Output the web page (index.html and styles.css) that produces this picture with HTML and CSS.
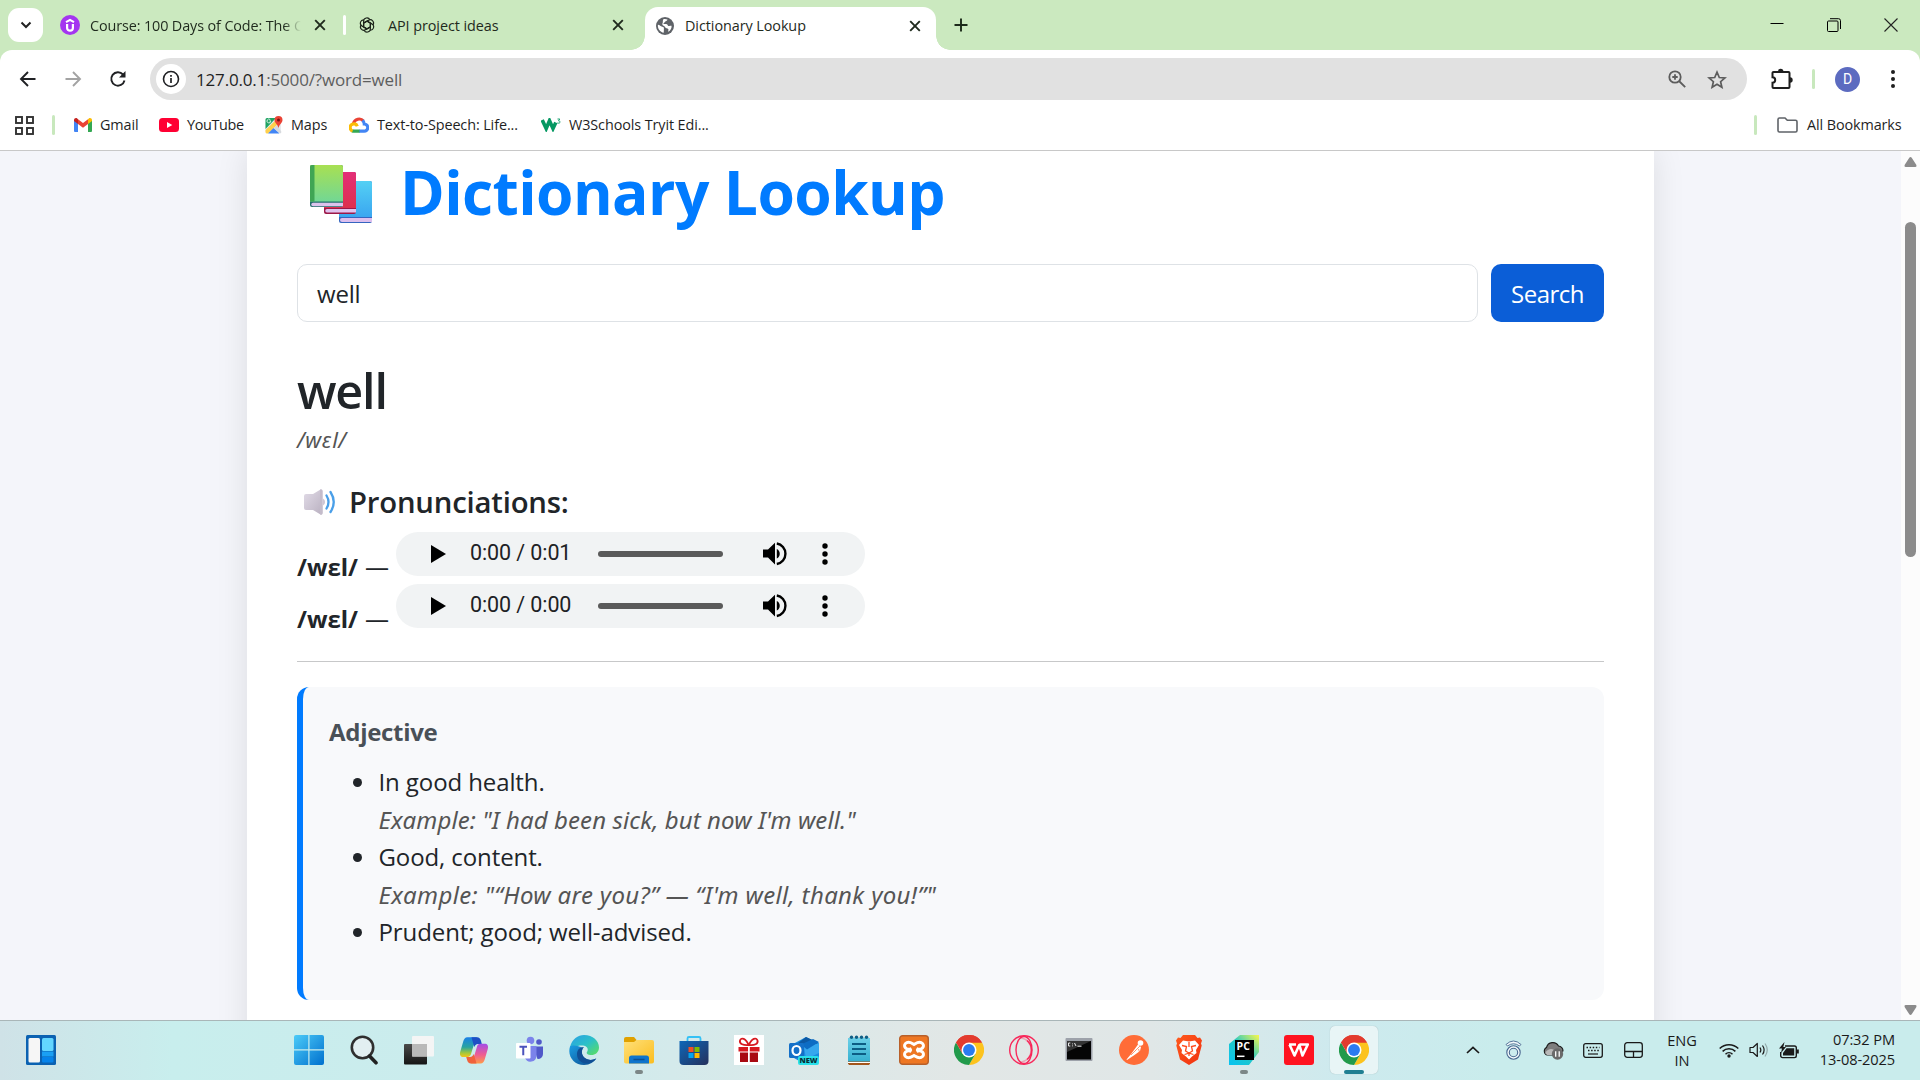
FILE: index.html
```html
<!DOCTYPE html>
<html lang="en">
<head>
<meta charset="utf-8">
<title>Dictionary Lookup</title>
<link rel="stylesheet" href="styles.css">
</head>
<body>
<svg class="defs" width="0" height="0" aria-hidden="true">
  <defs>
    <linearGradient id="gWin" x1="0" y1="0" x2="1" y2="1"><stop offset="0" stop-color="#4ccbf8"/><stop offset="1" stop-color="#0070ce"/></linearGradient>
    <linearGradient id="gBook1" x1="0" y1="0" x2="0" y2="1"><stop offset="0" stop-color="#a8e052"/><stop offset="1" stop-color="#72d794"/></linearGradient>
    <linearGradient id="gBook2" x1="0" y1="0" x2="0" y2="1"><stop offset="0" stop-color="#e32f78"/><stop offset="1" stop-color="#dd304d"/></linearGradient>
    <linearGradient id="gBook3" x1="0" y1="0" x2="0" y2="1"><stop offset="0" stop-color="#54d0f4"/><stop offset="1" stop-color="#3aa6f0"/></linearGradient>
    <linearGradient id="gSpk" x1="0" y1="0" x2="1" y2="1"><stop offset="0" stop-color="#e2dce8"/><stop offset="1" stop-color="#b9b0c0"/></linearGradient>
    <linearGradient id="gEdge" x1="0" y1="0" x2="1" y2="1"><stop offset="0" stop-color="#2a9fe6"/><stop offset=".5" stop-color="#2cc0c8"/><stop offset="1" stop-color="#5fe05a"/></linearGradient>
    <linearGradient id="gEdge2" x1="0" y1="0" x2="1" y2="1"><stop offset="0" stop-color="#1b9de2"/><stop offset="1" stop-color="#0c4a8e"/></linearGradient>
    <linearGradient id="gFold" x1="0" y1="0" x2="1" y2="1"><stop offset="0" stop-color="#ffe07a"/><stop offset="1" stop-color="#fbbd1e"/></linearGradient>
    <linearGradient id="gStore" x1="0" y1="0" x2="1" y2="1"><stop offset="0" stop-color="#0d67b8"/><stop offset="1" stop-color="#25305c"/></linearGradient>
    <linearGradient id="gCopL" x1="0" y1="0" x2="0" y2="1"><stop offset="0" stop-color="#1a7fe8"/><stop offset=".5" stop-color="#28a4a0"/><stop offset=".8" stop-color="#a5c83a"/><stop offset="1" stop-color="#f5c518"/></linearGradient>
    <linearGradient id="gCopR" x1="0" y1="0" x2="0" y2="1"><stop offset="0" stop-color="#a34be8"/><stop offset=".55" stop-color="#ee5d92"/><stop offset="1" stop-color="#ff9b48"/></linearGradient>
    <linearGradient id="gPy" x1="0" y1="1" x2="1" y2="0"><stop offset="0" stop-color="#07c3f2"/><stop offset=".5" stop-color="#21c7c8"/><stop offset="1" stop-color="#fcf84a"/></linearGradient>
    <linearGradient id="gBrave" x1="0" y1="0" x2="1" y2="1"><stop offset="0" stop-color="#ff5a1c"/><stop offset="1" stop-color="#f03010"/></linearGradient>
    <linearGradient id="gNote" x1="0" y1="0" x2="0" y2="1"><stop offset="0" stop-color="#6cd0e8"/><stop offset="1" stop-color="#36b0d0"/></linearGradient>
    <linearGradient id="gDark" x1="0" y1="0" x2="0" y2="1"><stop offset="0" stop-color="#4a4a4a"/><stop offset="1" stop-color="#151515"/></linearGradient>
  </defs>
  <symbol id="chrome" viewBox="0 0 48 48">
    <path d="M24 24 3.2 12A24 24 0 0 1 44.8 12Z" fill="#e33b2e"/>
    <path d="M24 12H44.8A24 24 0 0 1 24 48L34.4 30Z" fill="#fcc31e"/>
    <path d="M3.2 12A24 24 0 0 0 24 48L34.4 30 13.6 30Z" fill="#219a4b"/>
    <path d="M24 12H44.8A24 24 0 0 0 3.2 12L13.6 30Z" fill="#e33b2e"/>
    <circle cx="24" cy="24" r="12" fill="#fff"/><circle cx="24" cy="24" r="9.5" fill="#2b7bf0"/>
  </symbol>
  <symbol id="close" viewBox="0 0 12 12"><path d="M1.2 1.2 10.8 10.8M10.8 1.2 1.2 10.8" stroke="#1f2a1d" stroke-width="1.9" fill="none"/></symbol>
</svg>

<header class="browser">
  <div class="tabstrip">
    <button class="tab-search"><svg width="12" height="8" viewBox="0 0 12 8"><path d="M1.5 1.5 6 6l4.500-4.500" fill="none" stroke="#222" stroke-width="2"/></svg></button>
    <div class="tab tab-first">
      <svg class="fav" width="20" height="20" viewBox="0 0 20 20"><circle cx="10" cy="10" r="10" fill="#a435f0"/><path d="M6 7.200 10 4.800l4 2.400" fill="none" stroke="#fff" stroke-width="2"/><path d="M7.100 9v4a2.900 2.600 0 0 0 5.800 0V9" fill="none" stroke="#fff" stroke-width="2.200"/></svg>
      <span class="tab-title fade">Course: 100 Days of Code: The C</span>
      <svg class="tab-close" width="12" height="12"><use href="#close"/></svg>
    </div>
    <div class="tab-sep"></div>
    <div class="tab tab-second">
      <svg class="fav" width="18" height="18" viewBox="0 0 18 18"><g fill="none" stroke="#1c241a" stroke-width="1.100"><path id="knot" d="M5.600 10.800V5.200a3.300 3.300 0 0 1 6.300-1.400M5.600 7 9 5.100l4.600 2.700"/><use href="#knot" transform="rotate(60 9 9)"/><use href="#knot" transform="rotate(120 9 9)"/><use href="#knot" transform="rotate(180 9 9)"/><use href="#knot" transform="rotate(240 9 9)"/><use href="#knot" transform="rotate(300 9 9)"/></g></svg>
      <span class="tab-title">API project ideas</span>
      <svg class="tab-close" width="12" height="12"><use href="#close"/></svg>
    </div>
    <div class="tab tab-active">
      <svg class="fav" width="18" height="18" viewBox="0 0 18 18"><circle cx="9" cy="9" r="9" fill="#5f6368"/><path d="M1.900 7.800c2 .1 2.700 1.700 4.300 1.900 1.800.1 1.800 1.300 1.700 2.500.1 1.200-.2 2.400-.2 3.600-3.500-.5-6.300-4-5.800-8zM7.300 2.200c1.500-.4 3-.2 4.200.4-.2 1.300-1.300 1.600-2.300 1.900-.4 1.300-1.900 1.200-1.700 2.400 1.600.4 3.600-.5 4.200 1.300.5 1.200 1.900.7 3.900.6.2 2.600-1.200 4.900-3.300 6-.6-.8.700-1.900-.1-2.800-.7-1-2.500-.5-3-1.800-.4-1.400-2-1.100-2.700-2.200-.6-1.600.6-2 .3-3.300-.1-1 .2-1.700.5-2.500z" fill="#fff"/></svg>
      <span class="tab-title">Dictionary Lookup</span>
      <svg class="tab-close" width="12" height="12"><use href="#close"/></svg>
    </div>
    <svg class="new-tab" width="14" height="14" viewBox="0 0 14 14"><path d="M7 .5v13M.5 7h13" stroke="#1c2a1a" stroke-width="1.900"/></svg>
    <div class="window-controls">
      <svg width="14" height="14" viewBox="0 0 14 14"><path d="M.5 5.500h13" stroke="#000" stroke-width="1"/></svg>
      <svg width="14" height="14" viewBox="0 0 14 14"><rect x=".5" y="3" width="10.500" height="10.500" rx="1" fill="none" stroke="#000"/><path d="M3 .7h8.500a2 2 0 0 1 2 2V11" fill="none" stroke="#000"/></svg>
      <svg width="14" height="14" viewBox="0 0 14 14"><path d="M.5.5l13 13M13.500.5l-13 13" stroke="#222" stroke-width="1.100"/></svg>
    </div>
  </div>

  <div class="toolbar">
    <div class="nav-btn"><svg width="18" height="18" viewBox="0 0 18 18"><path d="M16.500 9H2.500M9 2 2 9l7 7" fill="none" stroke="#202124" stroke-width="1.900"/></svg></div>
    <div class="nav-btn"><svg width="18" height="18" viewBox="0 0 18 18"><path d="M1.500 9h14M9 2l7 7-7 7" fill="none" stroke="#a3a3a3" stroke-width="1.900"/></svg></div>
    <div class="nav-btn"><svg width="18" height="18" viewBox="0 0 18 18"><path d="M15.500 10.500A6.700 6.700 0 1 1 14 4.500l1.500 1.700" fill="none" stroke="#202124" stroke-width="1.900"/><path d="M16.500 1v6.500H10z" fill="#202124"/></svg></div>
    <div class="omnibox">
      <div class="site-info"><svg width="18" height="18" viewBox="0 0 18 18"><circle cx="9" cy="9" r="7.500" fill="none" stroke="#202124" stroke-width="1.600"/><path d="M9 8v5M9 5v1.700" stroke="#202124" stroke-width="1.700"/></svg></div>
      <span class="url"><span class="host">127.0.0.1</span>:5000/?word=well</span>
      <svg class="omni-icon" width="18" height="18" viewBox="0 0 18 18"><circle cx="7" cy="7" r="5.700" fill="none" stroke="#5c5c5c" stroke-width="1.800"/><path d="M11 11l6.200 6.200M7 4.300v5.400M4.300 7h5.400" stroke="#5c5c5c" stroke-width="1.800"/></svg>
      <svg class="omni-icon star" width="20" height="19" viewBox="0 0 20 19"><path d="M10 2.200l2.300 5.300 5.600.5-4.300 3.700 1.300 5.600L10 14.300l-4.900 3 1.300-5.600L2.100 8l5.600-.5z" fill="none" stroke="#5c5c5c" stroke-width="1.700"/></svg>
    </div>
    <svg class="puzzle" width="22" height="22" viewBox="0 0 22 22"><path d="M2.500 4h15a1 1 0 0 1 1 1v14a1 1 0 0 1-1 1h-15a1 1 0 0 1-1-1v-4.300a2.700 2.700 0 0 0 0-5.400V5a1 1 0 0 1 1-1z" fill="none" stroke="#1f1f1f" stroke-width="2"/><path d="M7 3.500a2.700 2.700 0 0 1 5.400 0zM19 9.300a2.700 2.700 0 0 1 0 5.400z" fill="#1f1f1f"/></svg>
    <div class="v-sep"></div>
    <div class="avatar">D</div>
    <svg class="kebab" width="6" height="20" viewBox="0 0 6 20"><g fill="#1f1f1f"><circle cx="3" cy="3" r="2"/><circle cx="3" cy="10" r="2"/><circle cx="3" cy="17" r="2"/></g></svg>
  </div>

  <div class="bookmarks">
    <svg class="apps" width="19" height="19" viewBox="0 0 19 19"><g fill="none" stroke="#333" stroke-width="1.900"><rect x="1" y="1" width="6" height="6"/><rect x="12" y="1" width="6" height="6"/><rect x="1" y="12" width="6" height="6"/><rect x="12" y="12" width="6" height="6"/></g></svg>
    <div class="v-sep"></div>
    <div class="bm bm-gmail"><svg width="18" height="14" viewBox="0 0 18 14"><path d="M0 2v11a1 1 0 0 0 1 1h3V5z" fill="#4285f4"/><path d="M18 2v11a1 1 0 0 1-1 1h-3V5z" fill="#34a853"/><path d="M14 1.300V6l4-3V2c0-1.700-2-2.500-3.200-1.500z" fill="#fbbc04"/><path d="M4 6V1.300l5 3.800 5-3.800V6L9 9.800z" fill="#ea4335"/><path d="M0 2v1l4 3V1.300L3.200.500C2-.5 0 .3 0 2z" fill="#c5221f"/></svg><span>Gmail</span></div>
    <div class="bm bm-yt"><svg width="20" height="14" viewBox="0 0 20 14"><rect width="20" height="14" rx="3.500" fill="#ff0033"/><path d="M8 4l5.300 3L8 10z" fill="#fff"/></svg><span>YouTube</span></div>
    <div class="bm bm-maps"><svg width="18" height="18" viewBox="0 0 18 18"><path d="M2 2h14v15H2a1.500 1.500 0 0 1-1.500-1.500v-12A1.500 1.500 0 0 1 2 2z" fill="#e8eaed"/><path d="M2 2h9L.5 13V3.500A1.500 1.500 0 0 1 2 2z" fill="#1fa463"/><path d="M.500 14 12 3l3 3L3 17.500H2A1.500 1.500 0 0 1 .5 16z" fill="#ffd04b"/><path d="M3 17.500l5.500-5.500 6 5.500z" fill="#4285f4"/><path d="M8.500 12 12 9l4.500 7-1 1.500z" fill="#d7dade"/><path d="M13.500 0A4 4 0 0 0 9.500 4c0 3 3.200 4 4 8 .8-4 4-5 4-8a4 4 0 0 0-4-4z" fill="#ea4335"/><circle cx="13.500" cy="4" r="1.500" fill="#7b1510"/><path d="M6 5H4.500m1.300.2A1.900 1.900 0 1 1 5.300 3.700" fill="none" stroke="#fff" stroke-width=".8"/></svg><span>Maps</span></div>
    <div class="bm bm-cloud"><svg width="20" height="16" viewBox="0 0 20 16"><path d="M4.500 6.500A5.800 5.800 0 0 1 14.500 4" fill="none" stroke="#ea4335" stroke-width="3.200"/><path d="M13.500 3.500c1.500 1.300 1.800 2.700 1.800 3.500a3.600 3.600 0 0 1-.3 7.200h-5" fill="none" stroke="#4285f4" stroke-width="3.200"/><path d="M10.500 14.200H5.300a3.500 3.500 0 0 1-2.300-.8" fill="none" stroke="#34a853" stroke-width="3.200"/><path d="M3.600 14A3.700 3.700 0 1 1 8.300 9.200" fill="none" stroke="#fbbc05" stroke-width="3.200"/></svg><span>Text-to-Speech: Life...</span></div>
    <div class="bm bm-w3"><svg width="20" height="14" viewBox="0 0 20 14"><path d="M1.200 2l4 8.500 3.300-7.800 3.500 7.800 2.800-6" fill="none" stroke="#059862" stroke-width="3.600"/><path d="M16.500 1h2.300l-1.300 1.800c1 0 1.500.6 1.500 1.300S18.300 5.500 16.300 5" fill="none" stroke="#059862" stroke-width=".9"/></svg><span>W3Schools Tryit Edi...</span></div>
    <div class="v-sep right-sep"></div>
    <div class="bm bm-all"><svg width="21" height="16" viewBox="0 0 21 16"><path d="M1 13.500v-11A1.500 1.500 0 0 1 2.500 1H8l2.300 2.300h8.200A1.500 1.500 0 0 1 20 4.800v8.700a1.500 1.500 0 0 1-1.500 1.500h-16A1.500 1.500 0 0 1 1 13.500z" fill="none" stroke="#5f6368" stroke-width="1.600"/></svg><span>All Bookmarks</span></div>
  </div>
</header>

<div class="viewport">
  <div class="page">
    <main class="container">
      <h1 class="title">
        <svg width="62" height="58" viewBox="0 0 62 58"><rect x="29" y="16" width="33" height="42" rx="2" fill="#3565c0"/><path d="M31 16h29a2 2 0 0 1 2 2v34H29V18a2 2 0 0 1 2-2z" fill="url(#gBook3)"/><path d="M32 53h30v4H32a2 2 0 0 1 0-4z" fill="#dcbfee"/><rect x="14" y="7" width="32" height="42" rx="2" fill="#9c1848"/><path d="M16 7h28a2 2 0 0 1 2 2v34H14V9a2 2 0 0 1 2-2z" fill="url(#gBook2)"/><path d="M17 44h29v3.500H17a1.750 1.750 0 0 1 0-3.500z" fill="#e0c3ee"/><rect width="33" height="42" rx="2" fill="#256e6c"/><path d="M2 0h29a2 2 0 0 1 2 2v34.500H0V2a2 2 0 0 1 2-2z" fill="url(#gBook1)"/><path d="M2 0h2.500v36.500H0V2a2 2 0 0 1 2-2z" fill="#40a554"/><path d="M3 37.800h30v3.400H3a1.700 1.700 0 0 1 0-3.400z" fill="#dcc3ec"/></svg>
        <span>Dictionary Lookup</span>
      </h1>
      <form class="search">
        <div class="field">well</div>
        <button type="button" class="submit">Search</button>
      </form>
      <h2 class="word">well</h2>
      <p class="phonetic">/wɛl/</p>
      <h4 class="pron-title">
        <svg width="32" height="26" viewBox="0 0 32 26"><path d="M0 7a2 2 0 0 1 2-2h7L16.500.4Q18.500 0 18.500 2v22q0 2-2 1.600L9 21H2a2 2 0 0 1-2-2z" fill="url(#gSpk)"/><path d="M16 .6q2.500-.6 2.500 1.400v22q0 2-2.500 1.400z" fill="#c4bccb"/><path d="M19 9.500a4 4 0 0 1 0 7z" fill="#cdc5d4"/><path d="M22.500 6.500q4 6.500 0 13M26.500 3q6.500 10 0 20" fill="none" stroke="#4a9fe8" stroke-width="2.300" stroke-linecap="round"/></svg>
        <span>Pronunciations:</span>
      </h4>
      <div class="pron"><strong>/wɛl/</strong><span class="dash">—</span>
        <div class="player">
          <svg class="play" width="15" height="18" viewBox="0 0 15 18"><path d="M0 0l15 9L0 18z"/></svg>
          <span class="time">0:00 / 0:01</span>
          <div class="track"></div>
          <svg class="volume" width="24" height="24" viewBox="0 0 24 24"><path d="M0 7.500v8h5L12 22.500V.8L5 7.500zM13.800 7v9.500a5.300 5.300 0 0 0 0-9.500z"/><path d="M13.800 1.500a10.400 10.400 0 0 1 0 20.500" fill="none" stroke="#000" stroke-width="2.400"/></svg>
          <svg class="more" width="6" height="22" viewBox="0 0 6 22"><circle cx="3" cy="3" r="2.700"/><circle cx="3" cy="11" r="2.700"/><circle cx="3" cy="19" r="2.700"/></svg>
        </div>
      </div>
      <div class="pron"><strong>/wɛl/</strong><span class="dash">—</span>
        <div class="player">
          <svg class="play" width="15" height="18" viewBox="0 0 15 18"><path d="M0 0l15 9L0 18z"/></svg>
          <span class="time">0:00 / 0:00</span>
          <div class="track"></div>
          <svg class="volume" width="24" height="24" viewBox="0 0 24 24"><path d="M0 7.500v8h5L12 22.500V.8L5 7.500zM13.800 7v9.500a5.300 5.300 0 0 0 0-9.500z"/><path d="M13.800 1.500a10.400 10.400 0 0 1 0 20.500" fill="none" stroke="#000" stroke-width="2.400"/></svg>
          <svg class="more" width="6" height="22" viewBox="0 0 6 22"><circle cx="3" cy="3" r="2.700"/><circle cx="3" cy="11" r="2.700"/><circle cx="3" cy="19" r="2.700"/></svg>
        </div>
      </div>
      <hr class="rule">
      <section class="meaning">
        <h5 class="pos">Adjective</h5>
        <ul class="defs-list">
          <li>In good health.<em class="ex-one">Example: "I had been sick, but now I'm well."</em></li>
          <li>Good, content.<em class="ex-two">Example: "“How are you?” — “I'm well, thank you!”"</em></li>
          <li>Prudent; good; well-advised.</li>
        </ul>
      </section>
    </main>
  </div>
  <div class="scrollbar">
    <svg width="13" height="10" viewBox="0 0 13 10"><path d="M6.500 0q.7 0 1.200.8L12.400 8q.6 2-1 2H1.600Q0 10 .6 8L5.300.8Q5.800 0 6.500 0z" fill="#8b8b8b"/></svg>
    <div class="thumb"></div>
    <svg class="down" width="13" height="10" viewBox="0 0 13 10"><path d="M6.500 10q-.7 0-1.200-.8L.6 2Q0 0 1.600 0h9.800q1.600 0 1 2L7.700 9.200q-.5.800-1.200.8z" fill="#8b8b8b"/></svg>
  </div>
</div>

<footer class="taskbar">
  <div class="widgets"><svg width="30" height="30" viewBox="0 0 30 30"><rect width="30" height="30" rx="1.500" fill="#0b62b2"/><rect x="2.500" y="3" width="11.500" height="24.500" rx="1.500" fill="#f6f6f6"/><rect x="16" y="3" width="11.500" height="13" rx="1.500" fill="#63d6ff"/><rect x="16" y="16.500" width="11.500" height="5" fill="#1aa0f4"/><rect x="16" y="22" width="11.500" height="5.500" rx="1" fill="#0683ea"/></svg></div>
  <div class="apps-row">
    <div class="app"><svg viewBox="0 0 30 30"><path d="M2 0h12.300v14.300H0V2a2 2 0 0 1 2-2zM15.500 0H28a2 2 0 0 1 2 2v12.300H15.500zM0 15.500h14.300V30H2a2 2 0 0 1-2-2zM15.500 15.500H30V28a2 2 0 0 1-2 2H15.500z" fill="url(#gWin)"/></svg></div>
    <div class="app"><svg viewBox="0 0 30 30"><circle cx="13.500" cy="12.500" r="10.700" fill="#e2eff1" stroke="#2f2f2f" stroke-width="2.600"/><path d="M20.500 21l6.500 6.800" stroke="#222" stroke-width="3.600" stroke-linecap="round"/></svg></div>
    <div class="app"><svg viewBox="0 0 30 30"><rect y="9" width="23" height="20.500" rx="1" fill="url(#gDark)"/><rect x="8" y="1" width="22" height="20.500" rx="1" fill="#f5f5f5" opacity=".95"/><path d="M8 9h15v12.500H8z" fill="#b9b9b9"/></svg></div>
    <div class="app"><svg viewBox="0 0 30 30"><path d="M19 2.200H8.500C6 2.200 5 4 4.300 6.200L1.300 16.500C.3 20 1.500 22 4.500 22h4c2 0 3-1.200 3.600-3.200L16 6c.7-2.500 1.500-3.800 3-3.800z" fill="url(#gCopL)"/><path d="M12.500 2.200H18c2.300 0 3.300 1.400 3.900 3.400L22.800 9H19c-2 0-3.200 1.500-3.800 3z" fill="#1d4fc4"/><path d="M11 28.500h10.500c2.500 0 3.500-1.800 4.200-4l3-10.300c1-3.500-.2-5.500-3.200-5.500h-4c-2 0-3 1.200-3.600 3.200L14 24.700c-.7 2.500-1.500 3.800-3 3.800z" fill="url(#gCopR)"/><path d="M17.500 28.500H12c-2.300 0-3.300-1.400-3.900-3.400L7.200 22H11c2 0 3.200-1.500 3.800-3z" fill="#f0623c"/></svg></div>
    <div class="app"><svg viewBox="0 0 30 30"><circle cx="16.500" cy="5.500" r="3.800" fill="#7b83eb"/><circle cx="25" cy="7" r="2.800" fill="#5059c9"/><path d="M19 11.500h10V19a5 5 0 0 1-5.500 5z" fill="#5059c9"/><path d="M11 11h11.500v10a6 6 0 0 1-11.500 2z" fill="#7b83eb"/><rect x="2" y="8" width="14.500" height="15.500" rx=".8" fill="#fff"/><path d="M5.500 11.800h7.500M9.250 11.800v8.500" stroke="#4b53bc" stroke-width="2" fill="none"/></svg></div>
    <div class="app"><svg viewBox="0 0 30 30"><path d="M1 12C3 4 9 0 15 0c9 0 15 6 15 12.500 0 5-4 7.500-7.500 7.500-4 0-5.500-1.500-4.500-3 2-3 0-6-4-6.500C9 10 3 12 1 18z" fill="url(#gEdge)"/><path d="M1 11.500C-2 21 5 30 15 30c6 0 10-3 12.300-6.500-3 1.500-6 1.800-8.800.8C12 22 12 16 14 13.500 9 10 3.500 10 1 11.500z" fill="url(#gEdge2)"/><path d="M8 19c0-4 3-7.200 7-7-3 2.500-3.500 9 3 12.300 3.500 1.200 6.500.6 9.300-.8C22 31 8 30 8 19z" fill="#114f95"/></svg></div>
    <div class="app dot"><svg viewBox="0 0 30 30"><path d="M0 4a2 2 0 0 1 2-2h8l2.500 3v4H0z" fill="#e0a100"/><path d="M0 7h10l2.500-2H28a2 2 0 0 1 2 2v19.500a2 2 0 0 1-2 2H2a2 2 0 0 1-2-2z" fill="url(#gFold)"/><path d="M5 28.500V23a2.500 2.500 0 0 1 2.500-2.500h15A2.500 2.500 0 0 1 25 23v5.500z" fill="#0f75cc"/><path d="M9.500 24.500h11" stroke="#0b4f93" stroke-width="1.500"/></svg></div>
    <div class="app"><svg viewBox="0 0 30 30"><path d="M8.500 7V3.500a1.500 1.500 0 0 1 1.500-1.500h10a1.500 1.500 0 0 1 1.500 1.500V7" fill="none" stroke="#35c1f5" stroke-width="1.800"/><path d="M.5 6h29v20a4 4 0 0 1-4 4h-21a4 4 0 0 1-4-4z" fill="url(#gStore)"/><path d="M9.500 12h5v5h-5z" fill="#f25022"/><path d="M15.500 12h5v5h-5z" fill="#7fba00"/><path d="M9.500 18h5v5h-5z" fill="#00a4ef"/><path d="M15.500 18h5v5h-5z" fill="#ffb900"/></svg></div>
    <div class="app"><svg viewBox="0 0 30 30"><path d="M0 0h30v30H0z" fill="#fff"/><path d="M14.500 10C12 3 7 2 6 5.500s3.500 5 9 4.500c5.500.5 9.500-1 8.500-4.500S17.500 3 15 10z" fill="none" stroke="#d71920" stroke-width="1.800"/><path d="M4.500 12h9.500v4.500H4.500zM15.800 12h9.700v4.500h-9.700z" fill="#d71920"/><path d="M6 17.500h8V27H6zM15.800 17.500H24V27h-8.200z" fill="#a80a12"/></svg></div>
    <div class="app"><svg viewBox="0 0 30 30"><path d="M5 8.500 17 2l13 6.500v15L17 30 5 23z" fill="#1a8be0"/><path d="M9 8 17 2l13 6-13 6z" fill="#0c59a4"/><path d="M15 12l15-4v10l-13 6z" fill="#36a7ee"/><path d="M12 9.500 24 4l6 3-12 7.500z" fill="#0d6cc4"/><rect y="8" width="15" height="15" rx="1.500" fill="#1470c8"/><ellipse cx="7.500" cy="15.500" rx="4" ry="4.500" fill="none" stroke="#fff" stroke-width="2.200"/><rect x="9" y="21" width="21" height="9" rx="2" fill="#29e0ea"/><text class="new-label" x="19.600" y="28.200" text-anchor="middle">NEW</text></svg></div>
    <div class="app"><svg viewBox="0 0 30 30"><path d="M4 26h22v2.500L25 30H5l-1-1.500z" fill="#a4561c"/><path d="M4 27h22v1H4z" fill="#fff"/><path d="M4 3h22v23.500H4z" fill="url(#gNote)"/><g fill="#0f5e85"><circle cx="7.500" cy="2.300" r="1.700"/><circle cx="12.500" cy="2.300" r="1.700"/><circle cx="17.500" cy="2.300" r="1.700"/><circle cx="22.500" cy="2.300" r="1.700"/></g><path d="M8 9h14M8 14h14M8 19h14" stroke="#0c5d84" stroke-width="1.800"/></svg></div>
    <div class="app"><svg viewBox="0 0 30 30"><rect x=".7" y=".7" width="28.600" height="28.600" rx="3" fill="#ee7723" stroke="#b8602a" stroke-width="1.400"/><g fill="none" stroke="#fff" stroke-width="3"><path d="M12.500 13.500C8 16 3.500 11.500 6.500 8.500s6-.5 8.500 1c2.500-1.500 5.500-4 8.500-1s-1.500 7.500-6 5"/><path d="M12.500 16.500C8 14 3.500 18.500 6.500 21.500s6 .5 8.500-1c2.500 1.500 5.500 4 8.500 1s-1.500-7.500-6-5"/></g></svg></div>
    <div class="app"><svg><use href="#chrome"/></svg></div>
    <div class="app"><svg viewBox="0 0 30 30"><g fill="none" stroke="#f8275a" stroke-width="1.400"><circle cx="15" cy="15" r="14.300"/><ellipse cx="15" cy="15" rx="8" ry="13.500"/><path d="M11 2.500C19 4 22 9 22 15s-3 11-11 12.500" opacity=".35"/><path d="M18 5.500c6 5 6 14 0 19"/></g></svg></div>
    <div class="app"><svg viewBox="0 0 30 30"><rect x="1.500" y="3" width="27" height="23" rx="1" fill="#9da2aa"/><path d="M3 6h24v18.500H3z" fill="#050505"/><path d="M3 6h24L3 17z" fill="#333"/><path d="M6.300 8H4.500v3h1.800M8.500 8.500v.8M8.500 10.500v.8M10.500 8l1.500 3M13.500 11.200h4" stroke="#e8e8e8" stroke-width="1" fill="none"/></svg></div>
    <div class="app"><svg viewBox="0 0 30 30"><circle cx="15" cy="15" r="15" fill="#ff6c37"/><circle cx="21.500" cy="8" r="2.800" fill="#fff"/><path d="M19 9.500l3 2.500-1 4-5.500 4L8 25l-.5-.5 5-6z" fill="#fff"/><path d="M21 11l-9 9M19.500 14l1 3" stroke="#ff6c37" stroke-width=".7"/></svg></div>
    <div class="app"><svg viewBox="0 0 30 30"><path d="M9 0h12l2.500 3 2.500-.5 2 3-1 3 .7 2L24 24.500 15 30l-9-5.500L2.300 10.500l.7-2-1-3 2-3 2.500.5z" fill="url(#gBrave)"/><path d="M9 5.500l6 1 6-1L25 10l-3 5 .5 3-4.500 3.500L15 24.500l-3-3L7.500 18l.5-3-3-5z" fill="#fff"/><path d="M8 10.500l4.500 1-1 4.500 3.500 2 3.500-2-1-4.500 4.500-1M15 7v5M10.500 19.500l4.500-1.300 4.500 1.300M15 18v3" fill="none" stroke="#ff4a1c" stroke-width="1.300"/></svg></div>
    <div class="app dot"><svg viewBox="0 0 30 30"><path d="M11 0h19v17L20 30H0V9z" fill="url(#gPy)"/><rect x="6" y="5" width="19" height="20" fill="#000"/><text class="pc-label" x="7.600" y="14.800">PC</text><path d="M8 21.300h7.500" stroke="#fff" stroke-width="1.500"/></svg></div>
    <div class="app"><svg viewBox="0 0 30 30"><rect width="30" height="30" rx="3" fill="#ff1320"/><path d="M5 9.500h7M5.500 9.500l5 11 4.800-10.500 3.200 10.500L23.800 9.500H15.500" fill="none" stroke="#fff" stroke-width="2.600" stroke-linejoin="round"/></svg></div>
    <div class="app current"><svg><use href="#chrome"/></svg></div>
  </div>
  <div class="tray">
    <div class="tray-chevron"><svg width="14" height="8" viewBox="0 0 14 8"><path d="M1 7l6-5.700L13 7" fill="none" stroke="#1a1a1a" stroke-width="1.700"/></svg></div>
    <div class="tray-cell"><svg width="17" height="20" viewBox="0 0 17 20"><g fill="none" stroke="#4a6890"><circle cx="8.500" cy="12.500" r="6.700" fill="#f2f9fb" stroke-width="1.100"/><circle cx="8.500" cy="12.500" r="4.200" fill="#cdecee" stroke-width="1.100"/><path d="M1 4.500Q8.500-2.500 16 4.500L14.500 6Q8.500 1.500 2.500 6z" fill="#f2f9fb" stroke-width=".9"/></g></svg></div>
    <div class="tray-cell"><svg width="21" height="19" viewBox="0 0 21 19"><path d="M4.500 14A4 4 0 0 1 3.500 6.500 6.500 6.500 0 0 1 15.500 5 4.700 4.700 0 0 1 20 10l-8 4z" fill="#7d7d7d" stroke="#1c1c1c" stroke-width="1.100"/><path d="M2 12c3-5 8-5 10-2v4H4z" fill="#b9b9b9"/><circle cx="14.500" cy="13" r="5.700" fill="#6a6a6a"/><path d="M12.700 10.300v5.400M16.200 10.300v5.400" stroke="#fff" stroke-width="1.300"/></svg></div>
    <div class="tray-cell"><svg width="20" height="15" viewBox="0 0 20 15"><rect x=".7" y=".7" width="18.600" height="13.600" rx="2" fill="none" stroke="#1a1a1a" stroke-width="1.300"/><path d="M3.500 4.500h13M5 7.500h11" stroke="#1a1a1a" stroke-width="1.500" stroke-dasharray="1.500 1.600"/><path d="M5 11h10" stroke="#1a1a1a" stroke-width="1.200"/></svg></div>
    <div class="tray-cell"><svg width="19" height="16" viewBox="0 0 19 16"><rect x=".7" y=".7" width="17.600" height="14.600" rx="2.500" fill="none" stroke="#1a1a1a" stroke-width="1.300"/><path d="M1 9.500h17M9.500 9.500V15" stroke="#1a1a1a" stroke-width="1.300"/></svg></div>
    <div class="lang">ENG<br>IN</div>
    <div class="status">
      <svg width="20" height="15" viewBox="0 0 20 15"><g fill="none" stroke="#1a1a1a" stroke-width="1.500"><path d="M.7 5.500a13.200 13.200 0 0 1 18.600 0M3.600 8.400a9 9 0 0 1 12.800 0M6.500 11.200a5 5 0 0 1 7 0"/></g><circle cx="10" cy="13" r="1.700" fill="#1a1a1a"/></svg>
      <svg width="20" height="16" viewBox="0 0 20 16"><path d="M1 5.500h3L8.300 1.500v13L4 10.500H1z" fill="none" stroke="#1a1a1a" stroke-width="1.200" stroke-linejoin="round"/><path d="M11 5.500q1.700 2.500 0 5M13.500 3.500q3.200 4.500 0 9" fill="none" stroke="#1a1a1a" stroke-width="1.200"/><path d="M16 1.500q4.500 6.500 0 13" fill="none" stroke="#93aaab" stroke-width="1.200"/></svg>
      <svg width="20" height="17" viewBox="0 0 20 17"><path d="M6 4h9.500A1.800 1.800 0 0 1 17.300 5.800v8a1.800 1.800 0 0 1-1.800 1.800h-12a1.800 1.800 0 0 1-1.800-1.800V10" fill="none" stroke="#1a1a1a" stroke-width="1.400"/><path d="M7.500 6.200h7.700v7.300H4V11zM18 7.500h1.800v4H18zM5.500 0 0 6.500h3L2 11l5-6H4.300z" fill="#1a1a1a"/></svg>
    </div>
    <div class="clock">07:32 PM<br>13-08-2025</div>
  </div>
</footer>
</body>
</html>
```
FILE: styles.css
```css
* { box-sizing: border-box; }
body {
  margin: 0;
  width: 1920px;
  height: 1080px;
  overflow: hidden;
  display: flex;
  flex-direction: column;
  background: #fff;
  color: #212529;
  font-family: "Open Sans", "Noto Sans", sans-serif;
}
svg { display: block; flex: none; }
.defs { position: absolute; }
button { border: 0; font: inherit; padding: 0; }

/* Browser frame */
.browser {
  height: 151px; flex: none;
  border-bottom: 1px solid #c8c8c8;
  background: linear-gradient(#cbe9bf 0 64px, #fff 64px);
}
.tabstrip {
  height: 50px;
  display: flex;
  align-items: center;
  font-size: 14.4px;
  letter-spacing: -.07px;
  color: #1f2a1d;
}
.tab-search {
  width: 35px; height: 34px; margin-left: 8px;
  border-radius: 11px;
  background: #fff;
  display: flex; align-items: center; justify-content: center;
}
.tab { display: flex; align-items: center; height: 43px; white-space: nowrap; }
.tab-close { margin-left: auto; }
.tab-first { width: 300px; padding: 0 17px 0 17px; gap: 10px; }
.fade {
  width: 213px; margin-right: -4px; letter-spacing: -.12px;
  -webkit-mask-image: linear-gradient(90deg, #000 91%, transparent 99%);
  mask-image: linear-gradient(90deg, #000 91%, transparent 99%);
}
.tab-sep { width: 3px; height: 20px; background: #fff; border-radius: 2px; }
.tab-second { width: 299px; padding: 0 21px 0 12px; gap: 12px; }
.tab-active {
  position: relative;
  width: 291px; padding: 0 15px 0 11px; gap: 11px;
  align-self: flex-end;
  background: #fff;
  border-radius: 13px 13px 0 0;
}
.tab-active .fav, .tab-active .tab-title, .tab-active .tab-close { transform: translateY(-3px); }
.tab-active::before, .tab-active::after {
  content: ""; position: absolute; bottom: 0; width: 14px; height: 14px;
}
.tab-active::before { left: -14px; background: radial-gradient(circle at 0 0, transparent 13.5px, #fff 14px); }
.tab-active::after { right: -14px; background: radial-gradient(circle at 100% 0, transparent 13.5px, #fff 14px); }
.new-tab { margin-left: 18px; }
.window-controls { margin-left: auto; margin-right: 22px; display: flex; gap: 43px; }

.toolbar {
  height: 58px;
  display: flex; align-items: center;
  padding-left: 5px;
  background: #fff;
  border-radius: 12px 12px 0 0;
}
.nav-btn { width: 45px; display: flex; justify-content: center; }
.omnibox {
  width: 1597px; height: 42px; margin-left: 10px;
  display: flex; align-items: center;
  padding-left: 6px;
  border-radius: 21px;
  background: #e1e1e1;
}
.site-info { width: 30px; height: 30px; border-radius: 50%; background: #fff; display: flex; align-items: center; justify-content: center; }
.url { margin: 2px 0 0 10px; font-size: 17px; letter-spacing: -.17px; color: #5e5e5e; line-height: 24px; }
.host { color: #1f1f1f; }
.omni-icon { margin-left: auto; }
.star { margin-left: 21px; margin-right: 20px; }
.puzzle { margin-left: 24px; }
.v-sep { width: 3px; height: 20px; border-radius: 2px; background: #c8e8bd; }
.toolbar .v-sep { margin-left: 19px; }
.avatar {
  width: 25px; height: 25px; margin-left: 20px;
  border-radius: 50%; background: #5c6bc0; color: #fff;
  font: 14px/25px Roboto, sans-serif; text-align: center;
}
.kebab { margin-left: 30px; }

.bookmarks {
  height: 34px;
  display: flex; align-items: center;
  padding-left: 15px;
  background: #fff;
  font-size: 14.4px;
  letter-spacing: -.1px;
  color: #1f1f1f;
  white-space: nowrap;
}
.bookmarks .v-sep { margin-left: 18px; }
.bm { display: flex; align-items: center; gap: 8px; }
.bm span { margin-top: -2px; }
.bm-gmail { width: 85px; margin-left: 19px; }
.bm-yt { width: 106px; letter-spacing: -.35px; }
.bm-maps { width: 84px; }
.bm-cloud { width: 192px; }
.bookmarks .right-sep { margin-left: auto; }
.bm-all { width: 125px; margin-left: 20px; margin-right: 18px; gap: 9px; }

/* Web page */
.viewport { height: 869px; flex: none; display: flex; background: #f4f5fa; overflow: hidden; }
.page { flex: 1; overflow: hidden; }
.container {
  width: 1407px; height: 1100px; margin-left: 247px;
  padding: 1px 50px 0;
  background: #fff;
  box-shadow: 0 0 30px rgba(0, 0, 0, .1);
  font-size: 24px;
}
h1, h2, h4, h5, p, ul { margin: 0; padding: 0; }
.title {
  height: 75px; padding-left: 13px;
  display: flex; align-items: center; gap: 28px;
  font-size: 60.5px; font-weight: 700; line-height: 75px; letter-spacing: -.6px;
  color: #007bff;
}
.title svg { margin-top: 9px; }
.title span { margin-top: 4px; }
.search { display: flex; gap: 13px; margin-top: 37px; height: 58px; }
.field { flex: 1; border: 1px solid #dee2e6; border-radius: 10px; padding-left: 19px; line-height: 57px; letter-spacing: -.2px; }
.submit { width: 113px; border-radius: 10px; background: #0b5ed7; color: #fff; line-height: 59px; letter-spacing: -.5px; }
.word { margin-top: 38px; font-size: 48.5px; font-weight: 600; line-height: 60px; letter-spacing: -1.2px; }
.phonetic { margin-top: 3px; font: italic 22px/33px "Noto Sans", sans-serif; letter-spacing: .5px; color: #555; }
.pron-title {
  margin-top: 27px; height: 38px; padding-left: 7px;
  display: flex; align-items: center; gap: 13px;
  font-size: 29.3px; font-weight: 600; line-height: 38px; letter-spacing: -.2px;
}
.pron-title + .pron { margin-top: 11px; }
.pron { height: 52px; display: flex; align-items: flex-end; line-height: 37.5px; }
.pron strong { width: 68px; margin-bottom: -1px; }
.dash { width: 31px; margin-bottom: -1px; }
.player {
  width: 469px; height: 44px;
  align-self: flex-start;
  display: flex; align-items: center;
  padding-left: 35px;
  border-radius: 22px;
  background: #f1f3f4;
}
.time { width: 104px; margin-left: 24px; margin-top: -3px; font: 21.5px/26px Roboto, sans-serif; letter-spacing: -.1px; white-space: nowrap; color: #202124; }
.track { width: 125px; height: 6px; margin-left: 24px; border-radius: 3px; background: #5a5a5a; }
.volume { margin-left: 40px; }
.more { margin-left: 35px; }
.rule { margin: 25px 0; border: 0; height: 1px; background: #c7c8c9; }
.meaning {
  height: 313px;
  padding: 30px 26px 0;
  border-left: 6px solid #007bff;
  border-radius: 12px;
  background: #f8f9fb;
}
.pos { font-size: 24px; line-height: 30px; font-weight: 700; letter-spacing: -.3px; color: #495057; }
.defs-list { margin-top: 16px; padding-left: 49.5px; line-height: 37.5px; letter-spacing: -.1px; list-style: none; }
.defs-list li { position: relative; }
.defs-list li::before {
  content: ""; position: absolute; left: -26px; top: 15px;
  width: 9px; height: 9px; border-radius: 50%; background: #212529;
}
.defs-list em { display: block; font-family: "Noto Sans", sans-serif; color: #555; }
.ex-one { letter-spacing: .09px; }
.ex-two { letter-spacing: .34px; }

.scrollbar { width: 19px; background: #fcfcfc; display: flex; flex-direction: column; align-items: center; padding: 6px 0 5px; }
.thumb { width: 11px; height: 335px; margin-top: 55px; border-radius: 6px; background: #8b8b8b; }
.down { margin-top: auto; }

/* Taskbar */
.taskbar {
  height: 60px; flex: none;
  display: flex; align-items: center;
  padding-bottom: 1px;
  border-top: 1px solid #a9b6b8;
  background: linear-gradient(90deg, #cfe2e7 0, #c8eeed 9%, #ccebed 28%, #d4eaeb 35%, #e2e7e6 50%, #e0e7e7 60%, #cdeaee 70%, #c9ecec 78%, #c9ecec 100%);
}
.widgets { margin-left: 26px; }
.apps-row { display: flex; margin-left: 225px; }
.app { position: relative; width: 55.05px; height: 48px; display: flex; align-items: center; justify-content: center; }
.app svg { width: 30px; height: 30px; position: relative; }
.dot::after, .current::after {
  content: ""; position: absolute; left: 50%; bottom: 0; width: 8px; height: 4px; margin-left: -4px;
  border-radius: 2px; background: #7c8787;
}
.current::before {
  content: ""; position: absolute; left: 3.5px; top: 0; width: 48px; height: 48px;
  border-radius: 5px; background: #e8f5f6; box-shadow: 0 0 1px rgba(0, 0, 0, .25);
}
.current::after { width: 20px; margin-left: -10px; background: #1f7f92; }
.new-label { font: 800 7.5px "Open Sans", sans-serif; fill: #08323a; }
.pc-label { font: 700 10.5px "Open Sans", sans-serif; fill: #fff; }
.tray { margin-left: auto; display: flex; align-items: center; color: #1a1a1a; font-size: 14.6px; line-height: 20px; letter-spacing: -.1px; }
.tray-chevron, .tray-cell { width: 40px; display: flex; justify-content: center; }
.lang { width: 58px; margin-top: -1px; text-align: center; }
.status { width: 80px; margin-left: 8px; display: flex; align-items: center; gap: 10px; }
.clock { width: 96px; margin-top: -3px; text-align: right; margin-right: 25px; }
```
